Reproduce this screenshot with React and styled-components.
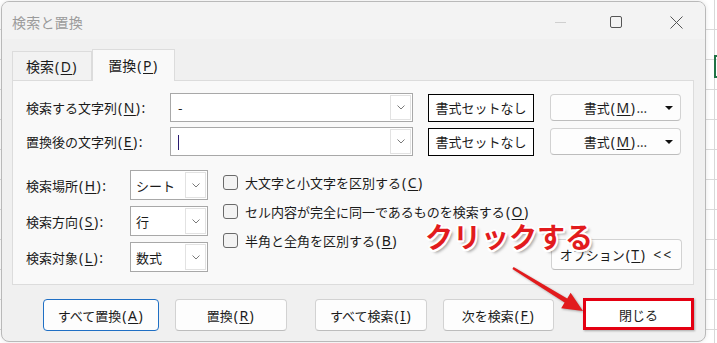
import React from "react";
import styled, { createGlobalStyle } from "styled-components";

const GlobalStyle = createGlobalStyle`
  html, body { margin: 0; padding: 0; }
  body {
    font-family: "Noto Sans CJK JP", "Noto Sans", sans-serif;
    color: #1b1b1b;
  }
  * { box-sizing: border-box; }
`;

const Sheet = styled.div`
  position: relative;
  width: 717px;
  height: 343px;
  overflow: hidden;
  padding: 1px 0 0 1px;
  background-color: #fff;
  background-image:
    linear-gradient(to right, transparent 714px, #d8d8d8 714px, #d8d8d8 715px, transparent 715px),
    repeating-linear-gradient(to bottom, transparent 0, transparent 29px, #dadada 29px, #dadada 30px);
`;

const SelectedCell = styled.div`
  position: absolute;
  left: 714px;
  top: 55px;
  width: 24px;
  height: 23px;
  border: 2px solid #217346;
`;

const Dialog = styled.div`
  width: 705px;
  height: 341px;
  border: 1px solid #b9b9b9;
  border-radius: 8px;
  background: #f0f0f0;
  overflow: hidden;
  display: flex;
  flex-direction: column;
  box-shadow: 0 0 5px rgba(0, 0, 0, 0.1);
`;

const TitleBar = styled.div`
  flex: none;
  height: 37px;
  display: flex;
  align-items: center;
  padding: 3px 0 0 10px;
  background: #f3f3f3;
`;

const Title = styled.div`
  flex: 1;
  font-size: 14px;
  color: #9b9b9b;
  letter-spacing: 0.2px;
`;

const WinButton = styled.div`
  width: 58px;
  height: 34px;
  display: flex;
  align-items: center;
  justify-content: center;
`;

const MinLine = styled.div`
  width: 11px;
  height: 1px;
  background: #cfcfcf;
`;

const MaxBox = styled.div`
  width: 12px;
  height: 12px;
  margin-right: 4px;
  border: 1px solid #555;
  border-radius: 2px;
`;

const Body = styled.div`
  flex: 1;
  display: flex;
  flex-direction: column;
  padding: 10px 11px 0 10px;
`;

const TabStrip = styled.div`
  display: flex;
  align-items: flex-end;
  height: 31px;
`;

const Tab = styled.div`
  position: relative;
  z-index: ${(p) => (p.$active ? 2 : 1)};
  width: ${(p) => p.$w}px;
  height: ${(p) => (p.$active ? 32 : 29)}px;
  margin-bottom: ${(p) => (p.$active ? -1 : 0)}px;
  border: 1px solid #dcdcdc;
  border-bottom: none;
  background: ${(p) => (p.$active ? "#f9f9f9" : "#f2f2f2")};
  display: flex;
  align-items: center;
  justify-content: center;
  font-size: 14px;
  padding-bottom: ${(p) => (p.$active ? 1 : 0)}px;
`;

const Panel = styled.div`
  height: 205px;
  background: #f9f9f9;
  border: 1px solid #dcdcdc;
  padding: 12px 11px 0 13px;
  display: flex;
  flex-direction: column;
  font-size: 13px;
`;

const FieldRow = styled.div`
  display: flex;
  align-items: center;
  height: 29px;
  margin-top: ${(p) => p.$mt || 0}px;
`;

const Label = styled.div`
  flex: none;
  width: ${(p) => p.$w}px;
  white-space: nowrap;
`;

const Combo = styled.div`
  flex: none;
  width: ${(p) => p.$w}px;
  height: ${(p) => p.$h}px;
  display: flex;
  background: #fff;
  border: 1px solid #a8a8a8;
`;

const ComboText = styled.div`
  flex: 1;
  display: flex;
  align-items: center;
  padding-left: ${(p) => p.$pl}px;
  white-space: nowrap;
`;

const Caret = styled.span`
  display: inline-block;
  width: 1px;
  height: 15px;
  margin-top: 1px;
  background: #2a1a70;
`;

const DropButton = styled.div`
  flex: none;
  width: 21px;
  margin: 1px;
  border: 1px solid #e2e2e2;
  display: flex;
  align-items: center;
  justify-content: center;
  background: #fff;
`;

const ClearButton = styled.div`
  flex: none;
  width: 106px;
  height: 28px;
  margin-left: 15px;
  border: 1px solid #000;
  background: #fff;
  display: flex;
  align-items: center;
  justify-content: center;
`;

const RoundButton = styled.div`
  position: relative;
  flex: none;
  width: ${(p) => p.$w}px;
  height: ${(p) => p.$h}px;
  margin-left: ${(p) => p.$ml || 0}px;
  border: 1px solid ${(p) => (p.$focus ? "#1f6fc4" : "#d2d2d2")};
  border-bottom-color: ${(p) => (p.$focus ? "#1f6fc4" : "#bdbdbd")};
  border-radius: 4px;
  background: #fdfdfd;
  display: flex;
  align-items: center;
  justify-content: center;
  font-size: 13px;
  white-space: nowrap;
`;

const MenuArrow = styled.span`
  position: absolute;
  right: 7px;
  top: 11px;
  width: 0;
  height: 0;
  border-left: 4px solid transparent;
  border-right: 4px solid transparent;
  border-top: 4px solid #111;
`;

const Chevrons = styled.span`
  margin-left: 7px;
  letter-spacing: 2px;
  font-family: "Noto Sans", sans-serif;
  font-size: 14px;
`;

const Options = styled.div`
  display: flex;
  margin-top: 14px;
`;

const SelectColumn = styled.div`
  display: flex;
  flex-direction: column;
  gap: 6px;
`;

const SelectRow = styled.div`
  display: flex;
  align-items: center;
  height: 30px;
`;

const CheckColumn = styled.div`
  display: flex;
  flex-direction: column;
  gap: 14px;
  margin-left: 15px;
  padding-top: 5px;
`;

const CheckRow = styled.div`
  display: flex;
  align-items: center;
  gap: 7px;
  height: 15px;
  white-space: nowrap;
`;

const CheckBox = styled.div`
  flex: none;
  width: 15px;
  height: 15px;
  border: 1px solid #6a6a6a;
  border-radius: 3px;
  background: #f3f3f3;
`;

const OptionsSlot = styled.div`
  margin-left: auto;
  align-self: flex-end;
  margin-bottom: 2px;
`;

const ButtonRow = styled.div`
  display: flex;
  gap: 28px;
  margin: 14px 0 0 31px;
`;

const ButtonGroup = styled.div`
  display: flex;
  gap: 16px;
  margin-left: ${(p) => p.$ml || 0}px;
`;

const Highlight = styled.div`
  width: 111px;
  height: 32px;
  margin-top: -1px;
  border: 3px solid #e40012;
  background: #fff;
  display: flex;
  align-items: center;
  justify-content: center;
  font-size: 13px;
  box-shadow: 1px 1px 2px rgba(0, 0, 0, 0.3);
`;

const Paren = styled.span`
  font-family: "Noto Sans", sans-serif;
  font-size: 14px;
  letter-spacing: 1.5px;
  margin-left: 1px;
  u {
    text-decoration-thickness: 1px;
    text-underline-offset: 2px;
  }
`;

const Callout = styled.div`
  position: absolute;
  left: 425px;
  top: 222px;
  font-size: 28px;
  line-height: 1;
  font-weight: 700;
  color: #e21b1d;
  white-space: nowrap;
  text-shadow:
    2px 0 #fff, -2px 0 #fff, 0 2px #fff, 0 -2px #fff,
    1.5px 1.5px #fff, -1.5px 1.5px #fff, 1.5px -1.5px #fff, -1.5px -1.5px #fff,
    3px 3px 3px rgba(0, 0, 0, 0.35);
`;

const ArrowSvg = styled.svg`
  position: absolute;
  left: 505px;
  top: 260px;
  overflow: visible;
  filter: drop-shadow(1px 1px 1px rgba(0, 0, 0, 0.3));
`;

const Key = ({ k, colon }) => (
  <Paren>
    (<u>{k}</u>){colon ? ":" : ""}
  </Paren>
);

const Chevron = () => (
  <svg width="8" height="5" viewBox="0 0 8 5">
    <path d="M0.5 0.5 L4 4 L7.5 0.5" fill="none" stroke="#7a7a7a" strokeWidth="1" />
  </svg>
);

const CloseIcon = () => (
  <svg width="13" height="13" viewBox="0 0 13 13">
    <path d="M0.5 0.5 L12.5 12.5 M12.5 0.5 L0.5 12.5" stroke="#555" strokeWidth="1" />
  </svg>
);

const fields = [
  { label: "検索する文字列", k: "N", value: "-" },
  { label: "置換後の文字列", k: "E", caret: true },
];

const selects = [
  { label: "検索場所", k: "H", value: "シート" },
  { label: "検索方向", k: "S", value: "行" },
  { label: "検索対象", k: "L", value: "数式" },
];

const checks = [
  { text: "大文字と小文字を区別する", k: "C" },
  { text: "セル内容が完全に同一であるものを検索する", k: "O" },
  { text: "半角と全角を区別する", k: "B" },
];

export default function App() {
  return (
    <>
      <GlobalStyle />
      <Sheet>
        <SelectedCell />
        <Dialog>
          <TitleBar>
            <Title>検索と置換</Title>
            <WinButton><MinLine /></WinButton>
            <WinButton><MaxBox /></WinButton>
            <WinButton><CloseIcon /></WinButton>
          </TitleBar>
          <Body>
            <TabStrip>
              <Tab $w={80}>検索<Key k="D" /></Tab>
              <Tab $w={83} $active>置換<Key k="P" /></Tab>
            </TabStrip>
            <Panel>
              {fields.map((f, i) => (
                <FieldRow key={f.k} $mt={i ? 5 : 0}>
                  <Label $w={144}>
                    {f.label}
                    <Key k={f.k} colon />
                  </Label>
                  <Combo $w={243} $h={29}>
                    <ComboText $pl={7}>{f.caret ? <Caret /> : f.value}</ComboText>
                    <DropButton><Chevron /></DropButton>
                  </Combo>
                  <ClearButton>書式セットなし</ClearButton>
                  <RoundButton $w={131} $h={27} $ml={16}>
                    書式<Key k="M" />...
                    <MenuArrow />
                  </RoundButton>
                </FieldRow>
              ))}
              <Options>
                <SelectColumn>
                  {selects.map((s) => (
                    <SelectRow key={s.k}>
                      <Label $w={104}>
                        {s.label}
                        <Key k={s.k} colon />
                      </Label>
                      <Combo $w={78} $h={30}>
                        <ComboText $pl={5}>{s.value}</ComboText>
                        <DropButton><Chevron /></DropButton>
                      </Combo>
                    </SelectRow>
                  ))}
                </SelectColumn>
                <CheckColumn>
                  {checks.map((c) => (
                    <CheckRow key={c.k}>
                      <CheckBox />
                      <span>
                        {c.text}
                        <Key k={c.k} />
                      </span>
                    </CheckRow>
                  ))}
                </CheckColumn>
                <OptionsSlot>
                  <RoundButton $w={131} $h={31}>
                    オプション<Key k="T" />
                    <Chevrons>&lt;&lt;</Chevrons>
                  </RoundButton>
                </OptionsSlot>
              </Options>
            </Panel>
            <ButtonRow>
              <ButtonGroup>
                <RoundButton $w={116} $h={32} $focus>すべて置換<Key k="A" /></RoundButton>
                <RoundButton $w={112} $h={32}>置換<Key k="R" /></RoundButton>
              </ButtonGroup>
              <ButtonGroup>
                <RoundButton $w={112} $h={32}>すべて検索<Key k="I" /></RoundButton>
                <RoundButton $w={111} $h={32}>次を検索<Key k="F" /></RoundButton>
              </ButtonGroup>
              <ButtonGroup $ml={1}>
                <Highlight>閉じる</Highlight>
              </ButtonGroup>
            </ButtonRow>
          </Body>
        </Dialog>
        <Callout>クリックする</Callout>
        <ArrowSvg width="80" height="56" viewBox="0 0 80 56">
          <polygon
            points="8.6,7 62.2,38.4 65.6,32.8 78,51 56.2,48.2 59.6,42.6 7.4,9"
            fill="#e21b1d"
          />
        </ArrowSvg>
      </Sheet>
    </>
  );
}
